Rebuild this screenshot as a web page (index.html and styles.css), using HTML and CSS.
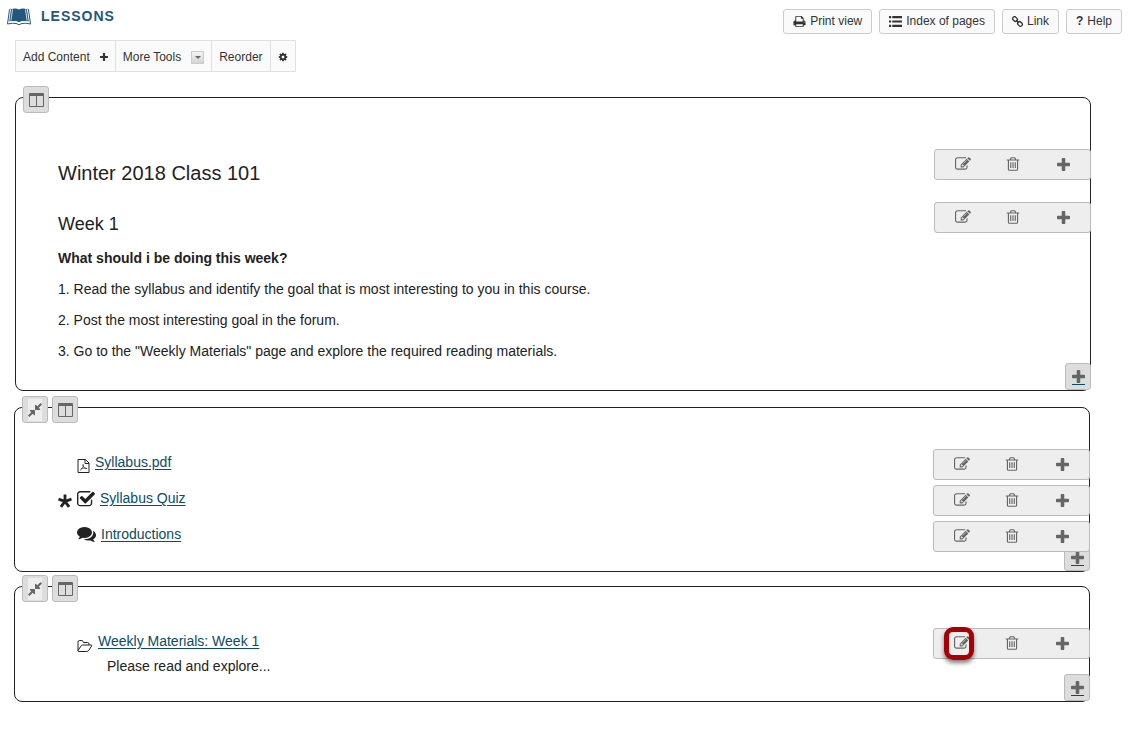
FILE: index.html
```html
<!DOCTYPE html>
<html lang="en">
<head>
    <meta charset="UTF-8">
    <title>Lessons</title>
    <link rel="stylesheet" href="styles.css">
</head>
<body>

<!-- icon shapes, used further down -->
<svg class="sprite" aria-hidden="true">
    <symbol id="i-plus" viewBox="192 128 1408 1408"><path d="M1600 736v192q0 40-28 68t-68 28h-416v416q0 40-28 68t-68 28h-192q-40 0-68-28t-28-68v-416h-416q-40 0-68-28t-28-68v-192q0-40 28-68t68-28h416v-416q0-40 28-68t68-28h192q40 0 68 28t28 68v416h416q40 0 68 28t28 68z"/></symbol>
    <symbol id="i-edit" viewBox="0 0 1792 1792"><path d="M888 1184l116-116-152-152-116 116v56h96v96h56zm440-720q-16-16-33 1l-350 350q-17 17-1 33t33-1l350-350q17-17 1-33zm80 594v190q0 119-84.5 203.5t-203.5 84.5h-832q-119 0-203.5-84.5t-84.5-203.5v-832q0-119 84.5-203.5t203.5-84.5h832q63 0 117 25 15 7 18 23 3 17-9 29l-49 49q-14 14-32 8-23-6-45-6h-832q-66 0-113 47t-47 113v832q0 66 47 113t113 47h832q66 0 113-47t47-113v-126q0-13 9-22l64-64q15-15 35-7t20 29zm-96-738l288 288-672 672h-288v-288zm444 132l-92 92-288-288 92-92q28-28 68-28t68 28l152 152q28 28 28 68t-28 68z"/></symbol>
    <symbol id="i-trash" viewBox="0 0 1792 1792"><path d="M704 736v576q0 14-9 23t-23 9h-64q-14 0-23-9t-9-23v-576q0-14 9-23t23-9h64q14 0 23 9t9 23zm256 0v576q0 14-9 23t-23 9h-64q-14 0-23-9t-9-23v-576q0-14 9-23t23-9h64q14 0 23 9t9 23zm256 0v576q0 14-9 23t-23 9h-64q-14 0-23-9t-9-23v-576q0-14 9-23t23-9h64q14 0 23 9t9 23zm128 724v-948h-896v948q0 22 7 40.5t14.5 27 10.5 8.5h832q3 0 10.5-8.5t14.5-27 7-40.5zm-672-1076h448l-48-117q-7-9-17-11h-317q-10 2-17 11zm928 32v64q0 14-9 23t-23 9h-96v948q0 83-47 143.5t-113 60.5h-832q-66 0-113-58.5t-47-141.5v-952h-96q-14 0-23-9t-9-23v-64q0-14 9-23t23-9h309l70-167q15-37 54-63t79-26h320q40 0 79 26t54 63l70 167h309q14 0 23 9t9 23z"/></symbol>
    <symbol id="i-compress" viewBox="128 128 1536 1536"><path d="M896 960v448q0 26-19 45t-45 19-45-19l-144-144-332 332q-10 10-23 10t-23-10l-114-114q-10-10-10-23t10-23l332-332-144-144q-19-19-19-45t19-45 45-19h448q26 0 45 19t19 45zm755-672q0 13-10 23l-332 332 144 144q19 19 19 45t-19 45-45 19h-448q-26 0-45-19t-19-45v-448q0-26 19-45t45-19 45 19l144 144 332-332q10-10 23-10t23 10l114 114q10 10 10 23z"/></symbol>
    <symbol id="i-columns" viewBox="0 0 15 14"><path fill-rule="evenodd" d="M1 0h13q1 0 1 1v12q0 1-1 1H1q-1 0-1-1V1q0-1 1-1zM1 3v10h6V3zM8 3v10h6V3z"/></symbol>
    <symbol id="i-print" viewBox="0 0 1792 1792"><path d="M448 1536h896v-256h-896v256zm0-640h896v-384h-160q-40 0-68-28t-28-68v-160h-640v640zm1152 64q0-26-19-45t-45-19-45 19-19 45 19 45 45 19 45-19 19-45zm128 0v416q0 13-9.5 22.5t-22.5 9.5h-224v160q0 40-28 68t-68 28h-960q-40 0-68-28t-28-68v-160h-224q-13 0-22.5-9.5t-9.5-22.5v-416q0-79 56.5-135.5t135.5-56.5h64v-544q0-40 28-68t68-28h672q40 0 88 20t76 48l152 152q28 28 48 76t20 88v256h64q79 0 135.5 56.5t56.5 135.5z"/></symbol>
    <symbol id="i-list" viewBox="0 0 12 12"><path d="M0 1h2v2H0zM3 1h9v2H3zM0 5h2v2H0zM3 5h9v2H3zM0 9h2v2H0zM3 9h9v2H3z"/></symbol>
    <symbol id="i-link" viewBox="0 0 12 12"><g fill="none" stroke="currentColor" stroke-width="1.400"><rect x="-2.700" y="-2" width="5.400" height="4" rx="1.700" transform="translate(3.300 3.300) rotate(45)"/><rect x="-2.700" y="-2" width="5.400" height="4" rx="1.700" transform="translate(8.700 8.700) rotate(45)"/><path d="M4.400 4.400l3.200 3.200"/></g></symbol>
    <symbol id="i-cog" viewBox="0 0 1792 1792"><path d="M1152 896q0-106-75-181t-181-75-181 75-75 181 75 181 181 75 181-75 75-181zm512-109v222q0 12-8 23t-20 13l-185 28q-19 54-39 91 35 50 107 138 10 12 10 25t-9 23q-27 37-99 108t-94 71q-12 0-26-9l-138-108q-44 23-91 38-16 136-29 186-7 28-36 28h-222q-14 0-24.5-8.5t-11.5-21.5l-28-184q-49-16-90-37l-141 107q-10 9-25 9-14 0-25-11-126-114-165-168-7-10-7-23 0-12 8-23 15-21 51-66.5t54-70.5q-27-50-41-99l-183-27q-13-2-21-12.5t-8-23.5v-222q0-12 8-23t19-13l186-28q14-46 39-92-40-57-107-138-10-12-10-24 0-10 9-23 26-36 98.5-107.5t94.5-71.5q13 0 26 10l138 107q44-23 91-38 16-136 29-186 7-28 36-28h222q14 0 24.5 8.5t11.5 21.5l28 184q49 16 90 37l142-107q9-9 24-9 13 0 25 10 129 119 165 170 7 8 7 22 0 12-8 23-15 21-51 66.5t-54 70.5q26 50 41 98l183 28q13 2 21 12.5t8 23.5z"/></symbol>
    <symbol id="i-check" viewBox="64 128 1664 1472"><path d="M1472 930v318q0 119-84.5 203.5t-203.5 84.5h-832q-119 0-203.5-84.5t-84.5-203.5v-832q0-119 84.5-203.5t203.5-84.5h832q63 0 117 25 15 7 18 23 3 17-9 29l-49 49q-10 10-23 10-3 0-9-2-23-6-45-6h-832q-66 0-113 47t-47 113v832q0 66 47 113t113 47h832q66 0 113-47t47-113v-254q0-13 9-22l64-64q10-10 23-10 6 0 12 3 20 8 20 29zm231-489l-814 814q-24 24-57 24t-57-24l-430-430q-24-24-24-57t24-57l110-110q24-24 57-24t57 24l263 263 647-647q24-24 57-24t57 24l110 110q24 24 24 57t-24 57z"/></symbol>
    <symbol id="i-comments" viewBox="0 256 1792 1408"><path d="M1408 768q0 139-94 257t-256.5 186.5-353.5 68.5q-86 0-176-16-124 88-278 128-36 9-86 16h-3q-11 0-20.5-8t-11.5-21q-1-3-1-6.5t.5-6.5 2-6l2.5-5 3.5-5.5 4-5 4.5-5 4-4.5q5-6 23-25t26-29.5 22.5-29 25-38.5 20.5-44q-124-72-195-177t-71-224q0-139 94-257t256.5-186.5 353.5-68.5 353.5 68.5 256.5 186.5 94 257zm384 256q0 120-71 224.5t-195 176.5q10 24 20.5 44t25 38.5 22.5 29 26 29.5 23 25q1 1 4 4.5t4.5 5 4 5 3.5 5.5l2.5 5 2 6 .5 6.5-1 6.5q-3 14-13 22t-22 7q-50-7-86-16-154-40-278-128-90 16-176 16-271 0-472-132 58 4 88 4 161 0 309-45t264-129q125-92 192-212t67-254q0-77-23-152 129 71 204 178t75 230z"/></symbol>
    <symbol id="i-pdf" viewBox="0 0 12 14"><path fill="none" stroke="currentColor" d="M.5.5h7.5l3.500 3.500v9.500H.5zM7.500.5v4h4"/><path fill="none" stroke="currentColor" stroke-width=".7" d="M5.500 5.500c.3 2.500 1.500 4 4.200 4.200M5.700 5.300c.4 2.500-1.300 5-3.400 6.200M3.500 9.800c1.500-.7 3.500-.9 5.500-.5"/></symbol>
    <symbol id="i-folder" viewBox="0 0 16 12"><path fill="none" stroke="currentColor" stroke-linejoin="round" d="M1 10.500V2q0-1.500 1.500-1.500h2.300q1.200 0 1.200 1.200.1.800 1 .8h3.500q1.500 0 1.500 1.500v1M1 10.500l3-4.500q.6-1 1.600-1h8.400q1.200 0 .6 1l-2.800 4.300q-.7 1.200-2 1.200H2q-1.200 0-1-1z"/></symbol>
    <symbol id="i-star" viewBox="0 0 14 14"><path fill="none" stroke="currentColor" stroke-width="2.800" d="M7 7.300V.5M7 7.300L.5 5.200M7 7.300l6.500-2.100M7 7.300l-4.100 5.600M7 7.300l4.100 5.600"/></symbol>
    <symbol id="i-book" viewBox="0 0 24 17"><path d="M4 1.200q4.500-1.500 8 .3 3.500-1.800 8-.3l1.800 12.300q-6-1.500-9.800.8-3.800-2.300-9.800-.8z"/><path fill="none" stroke="currentColor" d="M3.500 1L2.500 1.500.5 16q6-1.500 9.500-.3.800 1 2 1t2-1q3.500-1.200 9.500.3L21.500 1.500 20.500 1"/><path fill="none" stroke="#fff" stroke-width=".8" d="M5.500 1.500L3.900 12.500M18.500 1.500l1.600 11M2.200 14q6-1.200 9.800.8 3.800-2 9.800-.8"/></symbol>
</svg>

<header class="top">
    <h1><svg class="book"><use href="#i-book"/></svg>Lessons</h1>
    <div class="top-buttons">
        <button><svg class="icon-small"><use href="#i-print"/></svg>Print view</button>
        <button><svg class="icon-small"><use href="#i-list"/></svg>Index of pages</button>
        <button><svg class="icon-link"><use href="#i-link"/></svg>Link</button>
        <button><b>?</b>Help</button>
    </div>
</header>

<main>
    <nav class="toolbar">
        <button>Add Content <svg class="icon-plus"><use href="#i-plus"/></svg></button>
        <button>More Tools <span class="caret"></span></button>
        <button>Reorder</button>
        <button aria-label="Settings"><svg class="icon-cog"><use href="#i-cog"/></svg></button>
    </nav>

    <section class="block first">
        <div class="tabs">
            <button aria-label="Columns"><svg class="columns"><use href="#i-columns"/></svg></button>
        </div>
        <div class="row">
            <h2>Winter 2018 Class 101</h2>
            <div class="actions">
                <button aria-label="Edit"><svg><use href="#i-edit"/></svg></button>
                <button aria-label="Delete"><svg><use href="#i-trash"/></svg></button>
                <button aria-label="Add"><svg class="plus"><use href="#i-plus"/></svg></button>
            </div>
        </div>
        <div class="row">
            <div class="text">
                <h3>Week 1</h3>
                <p><b>What should i be doing this week?</b></p>
                <p>1. Read the syllabus and identify the goal that is most interesting to you in this course.</p>
                <p>2. Post the most interesting goal in the forum.</p>
                <p>3. Go to the "Weekly Materials" page and explore the required reading materials.</p>
            </div>
            <div class="actions">
                <button aria-label="Edit"><svg><use href="#i-edit"/></svg></button>
                <button aria-label="Delete"><svg><use href="#i-trash"/></svg></button>
                <button aria-label="Add"><svg class="plus"><use href="#i-plus"/></svg></button>
            </div>
        </div>
        <a href="#" class="add" aria-label="Add at end"><span><svg class="plus"><use href="#i-plus"/></svg></span></a>
    </section>

    <section class="block list">
        <div class="tabs">
            <button aria-label="Collapse"><span class="patch"><svg><use href="#i-compress"/></svg></span></button>
            <button aria-label="Columns"><svg class="columns"><use href="#i-columns"/></svg></button>
        </div>
        <div class="row">
            <div class="item">
                <span class="mark"></span>
                <svg class="pdf"><use href="#i-pdf"/></svg>
                <a href="#">Syllabus.pdf</a>
            </div>
            <div class="actions">
                <button aria-label="Edit"><svg><use href="#i-edit"/></svg></button>
                <button aria-label="Delete"><svg><use href="#i-trash"/></svg></button>
                <button aria-label="Add"><svg class="plus"><use href="#i-plus"/></svg></button>
            </div>
        </div>
        <div class="row">
            <div class="item">
                <span class="mark"><svg><use href="#i-star"/></svg></span>
                <svg class="check"><use href="#i-check"/></svg>
                <a href="#">Syllabus Quiz</a>
            </div>
            <div class="actions">
                <button aria-label="Edit"><svg><use href="#i-edit"/></svg></button>
                <button aria-label="Delete"><svg><use href="#i-trash"/></svg></button>
                <button aria-label="Add"><svg class="plus"><use href="#i-plus"/></svg></button>
            </div>
        </div>
        <div class="row">
            <div class="item">
                <span class="mark"></span>
                <svg class="comments"><use href="#i-comments"/></svg>
                <a href="#">Introductions</a>
            </div>
            <div class="actions">
                <button aria-label="Edit"><svg><use href="#i-edit"/></svg></button>
                <button aria-label="Delete"><svg><use href="#i-trash"/></svg></button>
                <button aria-label="Add"><svg class="plus"><use href="#i-plus"/></svg></button>
            </div>
        </div>
        <a href="#" class="add" aria-label="Add at end"><span><svg class="plus"><use href="#i-plus"/></svg></span></a>
    </section>

    <section class="block list last">
        <div class="tabs">
            <button aria-label="Collapse"><span class="patch"><svg><use href="#i-compress"/></svg></span></button>
            <button aria-label="Columns"><svg class="columns"><use href="#i-columns"/></svg></button>
        </div>
        <div class="row">
            <div>
                <div class="item">
                    <span class="mark"></span>
                    <svg class="folder"><use href="#i-folder"/></svg>
                    <a href="#">Weekly Materials: Week 1</a>
                </div>
                <p class="note">Please read and explore...</p>
            </div>
            <div class="actions">
                <button class="marked" aria-label="Edit"><svg><use href="#i-edit"/></svg></button>
                <button aria-label="Delete"><svg><use href="#i-trash"/></svg></button>
                <button aria-label="Add"><svg class="plus"><use href="#i-plus"/></svg></button>
            </div>
        </div>
        <a href="#" class="add" aria-label="Add at end"><span><svg class="plus"><use href="#i-plus"/></svg></span></a>
    </section>
</main>

</body>
</html>
```

FILE: styles.css
```css
*, *::after {
    box-sizing: border-box;
}
body {
    margin: 0;
    background-color: white;
    color: #222;
    font-family: "Liberation Sans", Arial, sans-serif;
    font-size: 14px;
    line-height: 21px;
}
h1, h2, h3, p {
    margin: 0;
    font-weight: normal;
}
button {
    font: inherit;
    color: inherit;
    padding: 0;
    border: none;
    background: none;
    cursor: pointer;
}
svg {
    display: block;
    flex-shrink: 0;
    fill: currentColor;
}
a {
    color: #0a4c66;
    text-underline-offset: 2px;
}
.sprite {
    position: absolute;
    width: 0;
    height: 0;
}

/* top line */
.top {
    display: flex;
    justify-content: space-between;
    align-items: flex-start;
    height: 40px;
    padding: 0 8px 0 7px;
}
.top h1 {
    display: flex;
    gap: 10px;
    align-items: center;
    height: 32px;
    color: #22587c;
    font-size: 14px;
    font-weight: bold;
    letter-spacing: 1px;
    text-transform: uppercase;
}
.book {
    width: 24px;
    height: 17px;
}
.top-buttons {
    display: flex;
    gap: 7px;
    padding-top: 9px;
}
.top-buttons button {
    display: flex;
    align-items: center;
    gap: 4px;
    height: 25px;
    padding: 0 9px;
    border: 1px solid #ccc;
    border-radius: 3px;
    background-color: #fafafa;
    color: #333;
    font-size: 12px;
}
.icon-small {
    width: 13px;
    height: 13px;
}
.icon-link {
    width: 11px;
    height: 11px;
}

/* tool bar */
.toolbar {
    display: flex;
    align-self: flex-start;
    height: 32px;
    margin-left: 1px;
    border: 1px solid #e0e0e0;
    background-color: #fafafa;
}
.toolbar button {
    display: flex;
    align-items: center;
    gap: 10px;
    padding: 2px 7px 0;
    color: #333;
    font-size: 12px;
}
.toolbar button + button {
    border-left: 1px solid #e0e0e0;
}
.icon-plus {
    width: 8px;
    height: 8px;
}
.icon-cog {
    width: 10px;
    height: 10px;
}
.caret {
    display: flex;
    align-items: center;
    justify-content: center;
    width: 13px;
    height: 13px;
    border: 1px solid #ccc;
    background: linear-gradient(#f4f4f4, #d4d4d4);
}
.caret::after {
    content: "";
    border: 3px solid transparent;
    border-top-color: #666;
    border-bottom: none;
}

/* lesson blocks */
main {
    display: flex;
    flex-direction: column;
    padding: 0 40px 32px 14px;
}
.block {
    position: relative;
    display: flex;
    flex-direction: column;
    gap: 5px;
    margin-top: 14px;
    padding: 41px 0 19px 43px;
    border: 1px solid #222;
    border-radius: 8px;
}
.first {
    gap: 22px;
    margin: 25px -1px 2px 1px;
    padding: 51px 0 28px 42px;
}
.last {
    padding-bottom: 24px;
}
.tabs {
    position: absolute;
    top: -12px;
    left: 7px;
    display: flex;
    gap: 4px;
}
.tabs button,
.add {
    display: flex;
    align-items: center;
    justify-content: center;
    width: 26px;
    height: 27px;
    border: 1px solid #bbb;
    border-radius: 3px;
    background-color: #ddd;
    color: #666;
}
.columns {
    width: 15px;
    height: 14px;
}
.patch {
    display: flex;
    align-items: center;
    width: 14px;
    height: 22px;
    background-color: #eee;
}
.patch svg {
    width: 14px;
    height: 14px;
}
.plus {
    width: 13px;
    height: 13px;
}
.add {
    position: absolute;
    right: -1px;
    bottom: 0;
    padding-top: 2px;
}
.add span {
    padding-bottom: 1px;
    border-bottom: 1px solid #0a4c66;
}
.row {
    display: flex;
    justify-content: space-between;
    align-items: flex-start;
}
.row h2 {
    font-size: 20px;
    line-height: 24px;
    padding-top: 12px;
    height: 31px;
}
.row h3 {
    font-size: 18px;
    line-height: 24px;
    padding: 10px 0 2px;
}
.text p {
    margin-top: 10px;
}
.actions {
    position: relative;
    z-index: 1;
    display: flex;
    flex-shrink: 0;
    width: 157px;
    height: 31px;
    margin-right: -1px;
    padding: 0 1px 1px 3px;
    border: 1px solid #bbb;
    border-radius: 3px;
    background-color: #eee;
    color: #666;
}
.actions button {
    position: relative;
    display: flex;
    flex: 1;
    align-items: center;
    justify-content: center;
}
.actions svg:not(.plus) {
    width: 16px;
    height: 16px;
}
/* red frame round the edit button */
.marked::after {
    content: "";
    position: absolute;
    top: -2px;
    left: 7px;
    width: 30px;
    height: 33px;
    border: 5px solid #a80008;
    border-radius: 9px;
    box-shadow: 0 3px 4px rgba(0, 0, 0, 0.5);
}

/* items */
.item {
    display: flex;
    align-items: center;
    gap: 5px;
    height: 27px;
}
.mark {
    width: 14px;
    padding-top: 4px;
}
.mark svg {
    width: 14px;
    height: 14px;
}
.pdf {
    width: 13px;
    height: 14px;
    align-self: flex-end;
    margin-bottom: 3px;
}
.check {
    width: 18px;
    height: 16px;
}
.comments {
    width: 19px;
    height: 15px;
}
.folder {
    width: 16px;
    height: 12px;
    align-self: flex-end;
    margin-bottom: 3px;
}
.note {
    padding: 1px 0 0 49px;
}
```
